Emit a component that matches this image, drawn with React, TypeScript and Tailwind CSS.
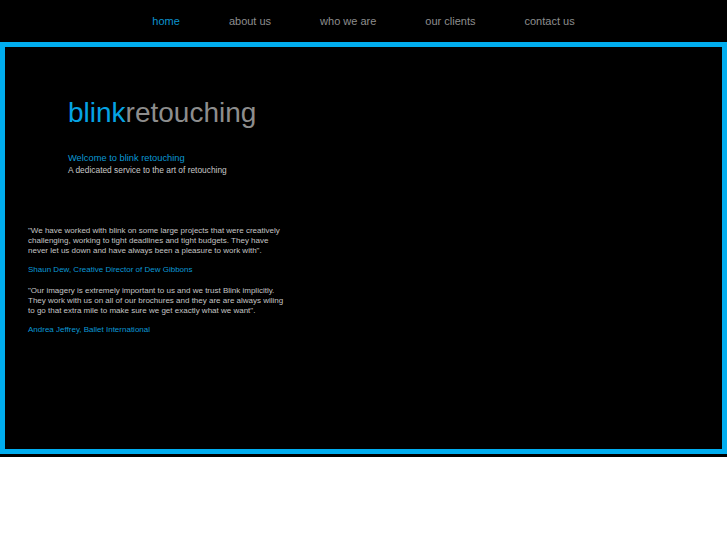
const NAV = ["home", "about us", "who we are", "our clients", "contact us"];

function Nav() {
  return (
    <nav className="h-[42px] bg-black flex items-center justify-center gap-[49px] text-[11px] leading-none">
      {NAV.map((item, i) => (
        <a
          key={item}
          href="#"
          className={i === 0 ? "text-[#0b93cf]" : "text-[#8e8e8e]"}
        >
          {item}
        </a>
      ))}
    </nav>
  );
}

function Testimonials() {
  return (
    <div className="mt-[50px] pl-[23px] text-[8px] leading-[10px] text-[#c4c4c4]">
      <p>
        "We have worked with blink on some large projects that were creatively
        <br />
        challenging, working to tight deadlines and tight budgets. They have
        <br />
        never let us down and have always been a pleasure to work with".
      </p>
      <p className="mt-[9px] text-[#0b98d4]">Shaun Dew, Creative Director of Dew Gibbons</p>
      <p className="mt-[11px]">
        "Our imagery is extremely important to us and we trust Blink implicitly.
        <br />
        They work with us on all of our brochures and they are are always wiling
        <br />
        to go that extra mile to make sure we get exactly what we want".
      </p>
      <p className="mt-[9px] text-[#0b98d4]">Andrea Jeffrey, Ballet International</p>
    </div>
  );
}

export default function App() {
  return (
    <div className="min-h-[545px] bg-white font-['Liberation_Sans',Arial,sans-serif]">
      <div className="bg-black pb-[3px]">
        <Nav />
        <div className="h-[412px] border-[5px] border-[#00adef] bg-black">
          <div className="pl-[63px] pt-[52px]">
            <h1 className="text-[28px] leading-[28px] font-normal">
              <span className="text-[#05a3e4]">blink</span>
              <span className="text-[#8d8d8d]">retouching</span>
            </h1>
            <p className="mt-[25px] text-[9.3px] leading-[12px] text-[#0b98d4]">
              Welcome to blink retouching
            </p>
            <p className="text-[8.4px] leading-[12px] text-[#c8c8c8]">
              A dedicated service to the art of retouching
            </p>
          </div>
          <Testimonials />
        </div>
      </div>
    </div>
  );
}
